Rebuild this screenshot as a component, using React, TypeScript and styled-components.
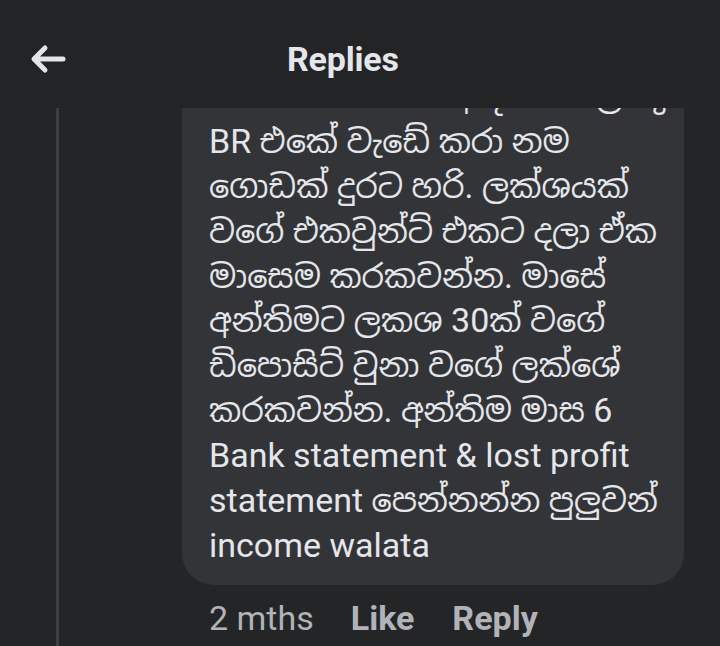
import React from "react";
import styled, { createGlobalStyle } from "styled-components";

const GlobalStyle = createGlobalStyle`
  html, body {
    margin: 0;
    padding: 0;
    background: #242527;
  }
  body {
    font-family: Roboto, "Noto Sans Sinhala", "Noto Serif Sinhala", "Noto Sans", sans-serif;
    -webkit-font-smoothing: antialiased;
  }
`;

const Screen = styled.div`
  width: 720px;
  height: 646px;
  display: flex;
  flex-direction: column;
  background: #242527;
  overflow: hidden;
`;

const Header = styled.header`
  flex: 0 0 108px;
  box-sizing: border-box;
  padding-top: 10px;
  display: flex;
  align-items: center;
  background: #232426;
  color: #e4e6eb;
  position: relative;
  z-index: 1;
`;

const BackButton = styled.button`
  width: 64px;
  height: 64px;
  margin-left: 16px;
  border: none;
  background: transparent;
  display: flex;
  align-items: center;
  justify-content: center;
  padding: 0;
  color: #e4e6eb;
`;

const Title = styled.h1`
  margin: 0 0 0 207px;
  font-size: 34px;
  font-weight: 700;
  letter-spacing: -0.2px;
  color: #e4e6eb;
`;

const Thread = styled.div`
  flex: 1;
  display: flex;
  overflow: hidden;
`;

const Rail = styled.div`
  flex: 0 0 3px;
  margin-left: 56px;
  background: #3e3f42;
`;

const ReplyColumn = styled.div`
  margin-left: 123px;
  width: 502px;
  display: flex;
  flex-direction: column;
`;

const Bubble = styled.div`
  margin-top: -34px;
  background: #333437;
  border-radius: 0 0 32px 32px;
  padding: 0 20px 17px 27px;
  color: #e4e6eb;
  font-size: 34px;
  line-height: 44.9px;
  overflow: hidden;
`;

const Line = styled.div`
  white-space: nowrap;
  height: 44.9px;
`;

const Sinhala = styled.span`
  font-size: 32px;
  line-height: 1;
`;

const Meta = styled.div`
  display: flex;
  align-items: baseline;
  padding: 13px 0 0 27px;
  font-size: 34px;
  color: #b0b3b8;
`;

const MetaItem = styled.span<{ $bold?: boolean; $gap?: number }>`
  font-weight: ${(p) => (p.$bold ? 700 : 400)};
  margin-left: ${(p) => p.$gap ?? 0}px;
`;

const lines = [
  "ඔයාගේ බිස්නස් ආදායම් ලොකු",
  "BR එකේ වැඩේ කරා නම",
  "ගොඩක් දුරට හරි. ලක්ශයක්",
  "වගේ එකවුන්ට් එකට දලා ඒක",
  "මාසෙම කරකවන්න. මාසේ",
  "අන්තිමට ලකශ 30ක් වගේ",
  "ඩිපොසිට් වුනා වගේ ලක්ශේ",
  "කරකවන්න. අන්තිම මාස 6",
  "Bank statement & lost profit",
  "statement පෙන්නන්න පුලුවන්",
  "income walata",
];

const renderLine = (text: string) =>
  text.split(/([\u0D80-\u0DFF\u200D]+)/).map((part, i) =>
    /[\u0D80-\u0DFF]/.test(part) ? <Sinhala key={i}>{part}</Sinhala> : part
  );

export default function App() {
  return (
    <>
      <GlobalStyle />
      <Screen>
        <Header>
          <BackButton aria-label="Back">
            <svg width="36" height="30" viewBox="0 0 36 30" fill="none">
              <path
                d="M33 15H5M15 4L4 15l11 11"
                stroke="currentColor"
                strokeWidth="5"
                strokeLinecap="round"
                strokeLinejoin="round"
              />
            </svg>
          </BackButton>
          <Title>Replies</Title>
        </Header>
        <Thread>
          <Rail />
          <ReplyColumn>
            <Bubble>
              {lines.map((l, i) => (
                <Line key={i}>{renderLine(l)}</Line>
              ))}
            </Bubble>
            <Meta>
              <MetaItem>2 mths</MetaItem>
              <MetaItem $bold $gap={37}>Like</MetaItem>
              <MetaItem $bold $gap={38}>Reply</MetaItem>
            </Meta>
          </ReplyColumn>
        </Thread>
      </Screen>
    </>
  );
}
